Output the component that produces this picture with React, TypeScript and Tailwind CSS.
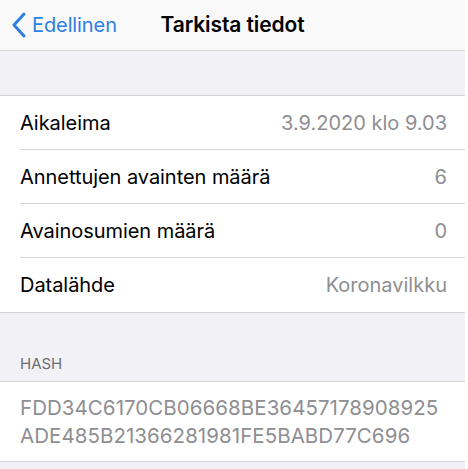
import React from "react";

const rows: [string, string][] = [
  ["Aikaleima", "3.9.2020 klo 9.03"],
  ["Annettujen avainten määrä", "6"],
  ["Avainosumien määrä", "0"],
  ["Datalähde", "Koronavilkku"],
];

export default function App() {
  return (
    <div className="w-[468px] h-[469px] bg-white overflow-hidden" style={{ fontFamily: "Inter, 'Noto Sans', sans-serif" }}>
      <div className="w-[465px] h-full bg-[#f2f2f6] flex flex-col">
        <div className="h-[51px] bg-[#f9f9fa] border-b border-[#d4d4d8] flex items-center relative">
          <div className="flex items-center pl-[11px]">
            <svg width="16" height="26" viewBox="0 0 16 26" fill="none">
              <path d="M13 2 L3 13 L13 24" stroke="#2f7fe0" strokeWidth="3" strokeLinecap="round" strokeLinejoin="round" />
            </svg>
            <span className="ml-[5px] text-[20px] text-[#2f7fe0] tracking-[-0.1px]">Edellinen</span>
          </div>
          <div className="absolute left-0 right-0 top-0 h-full flex items-center justify-center pointer-events-none">
            <span className="text-[21px] font-semibold text-black tracking-[-0.1px]">Tarkista tiedot</span>
          </div>
        </div>
        <div className="h-[44px]" />
        <div className="bg-white border-t border-b border-[#d4d4d8]">
          {rows.map(([k, v], i) => (
            <div key={k} className="pl-[20px]">
              <div className={`h-[54px] flex items-center justify-between pr-[18px] ${i < rows.length - 1 ? "border-b border-[#d4d4d8]" : ""}`}>
                <span className="text-[20px] text-black tracking-[-0.05px]">{k}</span>
                <span className="text-[20px] text-[#8e8e93] tracking-[0px]">{v}</span>
              </div>
            </div>
          ))}
        </div>
        <div className="h-[68px] flex items-end pl-[20px] pb-[6px]">
          <span className="text-[15px] text-[#6d6d72]">HASH</span>
        </div>
        <div className="bg-white border-t border-b border-[#d4d4d8] pl-[20px] pt-[12px] pb-[11px]">
          <div className="text-[20.5px] leading-[28px] text-[#8e8e93] tracking-[0.05px]">
            FDD34C6170CB06668BE36457178908925
            <br />
            ADE485B21366281981FE5BABD77C696
          </div>
        </div>
      </div>
    </div>
  );
}
